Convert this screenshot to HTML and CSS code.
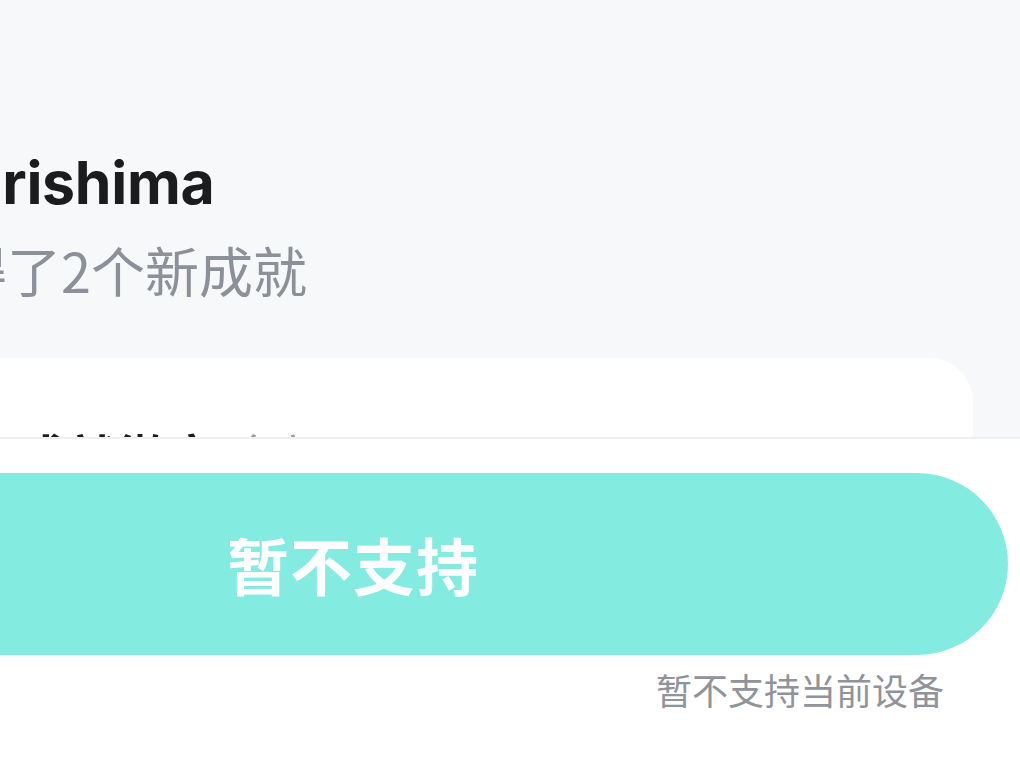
FILE: index.html
```html
<!DOCTYPE html>
<html lang="zh-CN">
<head>
<meta charset="utf-8">
<title>成就</title>
<link rel="stylesheet" href="styles.css">
</head>
<body>
  <main class="screen">
    <header class="header">
      <div class="name">Kirishima</div>
      <div class="subtitle">获得了2个新成就</div>
    </header>
    <section class="card">
      <div class="card-title">成就徽章 <span class="card-meta">全部</span></div>
    </section>
  </main>
  <footer class="footer">
    <button class="action" type="button">暂不支持</button>
    <p class="hint">暂不支持当前设备</p>
  </footer>
</body>
</html>
```

FILE: styles.css
```css
html, body {
  margin: 0;
  padding: 0;
}
body {
  width: 1020px;
  height: 765px;
  overflow: hidden;
  background: #f7f8fa;
  font-family: "Inter", "Noto Sans CJK SC", sans-serif;
  position: relative;
}
.screen {
  display: flex;
  flex-direction: column;
}
.header {
  padding-top: 147px;
  display: flex;
  flex-direction: column;
}
.name {
  font-size: 59px;
  line-height: 72px;
  font-weight: 700;
  color: #1b1c1e;
  margin-left: -56px;
  white-space: nowrap;
  letter-spacing: -0.3px;
}
.subtitle {
  margin-top: 19px;
  font-family: "Noto Sans CJK SC", sans-serif;
  font-size: 54px;
  line-height: 64px;
  color: #8c9099;
  margin-left: -101px;
  white-space: nowrap;
}
.card {
  margin-top: 56px;
  margin-left: -40px;
  margin-right: 47px;
  height: 400px;
  background: #ffffff;
  border-radius: 0 44px 0 0;
  padding: 72px 0 0 57px;
  box-sizing: border-box;
}
.card-title {
  font-family: "Noto Sans CJK SC", sans-serif;
  font-size: 50px;
  line-height: 50px;
  font-weight: 700;
  color: #1b1c1e;
  white-space: nowrap;
}
.card-meta {
  color: #9a9da3;
  font-weight: 400;
}
.footer {
  position: absolute;
  left: 0;
  right: 0;
  bottom: 0;
  height: 328px;
  background: #ffffff;
  border-top: 2px solid #eef0f3;
  box-sizing: border-box;
  display: flex;
  flex-direction: column;
  align-items: stretch;
  padding-top: 34px;
}
.action {
  margin-left: -302px;
  margin-right: 12px;
  height: 182px;
  border: 0;
  border-radius: 91px;
  background: #84ebe1;
  color: #ffffff;
  font-family: "Noto Sans CJK SC", sans-serif;
  font-size: 62px;
  font-weight: 700;
  letter-spacing: 1px;
  padding: 0;
}
.hint {
  margin: 14px 76px 0 0;
  text-align: right;
  font-family: "Noto Sans CJK SC", sans-serif;
  font-size: 36px;
  line-height: 40px;
  color: #8f939a;
}
```
